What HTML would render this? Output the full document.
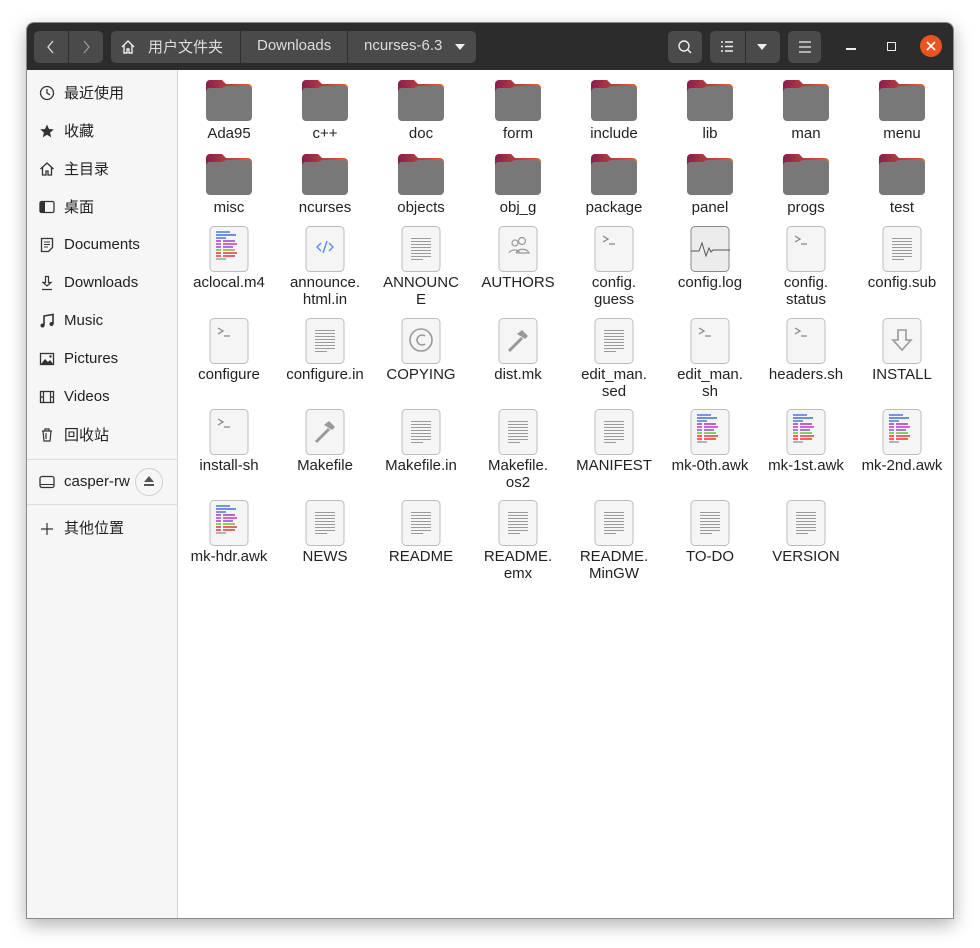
<!DOCTYPE html>
<html><head><meta charset="utf-8"><style>
*{margin:0;padding:0;box-sizing:border-box}
body{width:980px;height:948px;background:#fff;position:relative;overflow:hidden;font-family:"Liberation Sans","Noto Sans CJK SC",sans-serif}
#win{position:absolute;left:26px;top:22px;width:928px;height:897px;background:#fff;border:1px solid #8a8a8a;border-radius:8px 8px 0 0;overflow:hidden;box-shadow:0 6px 18px rgba(0,0,0,.3)}
#hdr{position:absolute;left:0;top:0;width:928px;height:47px;background:#2c2c2c}
.btn{position:absolute;top:8px;height:32px;background:#4a4a4a;border-radius:5px;color:#ddd;font-size:15px}
.sep{position:absolute;top:0;width:1px;height:32px;background:#2e2e2e}
#side{position:absolute;left:0;top:47px;width:151px;height:850px;background:#f6f6f6;border-right:1px solid #d6d6d6}
.si{position:absolute;left:37px;font-size:15px;color:#222;line-height:18px}
.sic{position:absolute;left:12px;width:16px;height:16px}
.hr{position:absolute;left:0;width:151px;height:1px;background:#dcdcdc}
.it{position:absolute;width:96px;text-align:center;font-size:15px;line-height:17px;color:#222}
.it svg{display:block;margin:0 auto}
</style></head><body>
<svg width="0" height="0" style="position:absolute">
<defs>
<linearGradient id="fg" x1="0" y1="0" x2="1" y2="0"><stop offset="0" stop-color="#8a1e4f"/><stop offset="1" stop-color="#e9602a"/></linearGradient>
<symbol id="fold" viewBox="0 0 48 42"><path d="M1 5a4 4 0 0 1 4-4h12l4 4h22a4 4 0 0 1 4 4v10H1z" fill="url(#fg)"/><path d="M1 13a4 4 0 0 1 4-4h12l4-2h22a4 4 0 0 1 4 4v27a4 4 0 0 1-4 4H5a4 4 0 0 1-4-4z" fill="#787878"/></symbol>
<symbol id="doc" viewBox="0 0 40 46"><rect x="1" y="0.5" width="38" height="45" rx="4" fill="#f5f5f5" stroke="#bcbcbc"/></symbol>
<symbol id="txt" viewBox="0 0 40 46"><g stroke="#9a9a9a" stroke-width="1"><path d="M10 12.5h20M10 15.5h20M10 18.5h20M10 21.5h20M10 24.5h20M10 27.5h20M10 30.5h20M10 33.5h12"/></g></symbol>
<symbol id="code" viewBox="0 0 40 46"><g stroke-width="1.4"><path d="M7 6h14" stroke="#3d6fe0"/><path d="M7 9h20" stroke="#3d6fe0"/><path d="M7 12h10" stroke="#3d6fe0"/><path d="M7 15h5M14 15h12" stroke="#a23ac0"/><path d="M7 18h5M14 18h14" stroke="#c03ac0"/><path d="M7 21h5M14 21h10" stroke="#8b4fd0"/><path d="M7 24h5M14 24h12" stroke="#6abf3a"/><path d="M7 27h5M14 27h14" stroke="#e33"/><path d="M7 30h5M14 30h12" stroke="#e33"/><path d="M7 33h10" stroke="#999"/></g></symbol>
<symbol id="term" viewBox="0 0 40 46"><path d="M9 10l5 3-5 3M15 18h6" fill="none" stroke="#888" stroke-width="1.3"/></symbol>
</defs></svg>
<div id="win">
<div id="hdr">
 <div class="btn" style="left:7px;width:69px"><div class="sep" style="left:34px"></div>
  <svg style="position:absolute;left:12px;top:9px" width="10" height="14"><path d="M7 1L2 7l5 6" fill="none" stroke="#ddd" stroke-width="1.3"/></svg>
  <svg style="position:absolute;left:47px;top:9px" width="10" height="14"><path d="M3 1l5 6-5 6" fill="none" stroke="#999" stroke-width="1.3"/></svg></div>
 <div class="btn" style="left:84px;width:365px">
  <svg style="position:absolute;left:9px;top:8px" width="16" height="16"><path d="M2 8L8 2l6 6M4 6.5V14h3v-4h2v4h3V6.5" fill="none" stroke="#eee" stroke-width="1.4"/></svg>
  <span style="position:absolute;left:37px;top:5px">用户文件夹</span><div class="sep" style="left:129px"></div>
  <span style="position:absolute;left:146px;top:6px">Downloads</span><div class="sep" style="left:236px"></div>
  <span style="position:absolute;left:253px;top:6px">ncurses-6.3</span>
  <svg style="position:absolute;left:344px;top:13px" width="10" height="6"><path d="M0 0h10L5 6z" fill="#eee"/></svg></div>
 <div class="btn" style="left:641px;width:34px"><svg style="position:absolute;left:9px;top:8px" width="16" height="16"><circle cx="7" cy="7" r="5" fill="none" stroke="#eee" stroke-width="1.4"/><path d="M10.5 10.5L14 14" stroke="#eee" stroke-width="1.5"/></svg></div>
 <div class="btn" style="left:683px;width:70px"><div class="sep" style="left:35px"></div>
  <svg style="position:absolute;left:11px;top:10px" width="14" height="12"><path d="M0 1h2M0 5.5h2M0 10h2M4 1h8M4 5.5h8M4 10h8" stroke="#eee" stroke-width="1.6"/></svg>
  <svg style="position:absolute;left:47px;top:13px" width="10" height="6"><path d="M0 0h10L5 6z" fill="#eee"/></svg></div>
 <div class="btn" style="left:761px;width:33px"><svg style="position:absolute;left:10px;top:10px" width="14" height="12"><path d="M1 1h12M1 6h12M1 11h12" stroke="#eee" stroke-width="1.3"/></svg></div>
 <div style="position:absolute;left:819px;top:25px;width:10px;height:1.5px;background:#eee"></div>
 <div style="position:absolute;left:860px;top:19px;width:9px;height:9px;border:1.5px solid #eee"></div>
 <div style="position:absolute;left:893px;top:12px;width:22px;height:22px;border-radius:50%;background:#e95420"></div>
 <svg style="position:absolute;left:898px;top:17px" width="12" height="12"><path d="M2 2l8 8M10 2l-8 8" stroke="#fff" stroke-width="1.6"/></svg>
</div>
<div id="side">
 <svg class="sic" style="top:15px"><circle cx="8" cy="8" r="6.5" fill="none" stroke="#333" stroke-width="1.3"/><path d="M8 4v4l3 2" fill="none" stroke="#333" stroke-width="1.3"/></svg><div class="si" style="top:15px">最近使用</div>
 <svg class="sic" style="top:53px"><path d="M8 1.5l2 4.5 4.8.4-3.7 3.2 1.1 4.8L8 11.8 3.8 14.4l1.1-4.8L1.2 6.4 6 6z" fill="#333"/></svg><div class="si" style="top:53px">收藏</div>
 <svg class="sic" style="top:91px"><path d="M1.5 8L8 2l6.5 6M3.5 6.5V14h3.5v-4h2v4h3.5V6.5" fill="none" stroke="#333" stroke-width="1.3"/></svg><div class="si" style="top:91px">主目录</div>
 <svg class="sic" style="top:129px"><rect x="1" y="2.5" width="14" height="11" rx="1.5" fill="none" stroke="#333" stroke-width="1.3"/><rect x="1" y="2.5" width="5" height="11" fill="#333"/></svg><div class="si" style="top:129px">桌面</div>
 <svg class="sic" style="top:167px"><path d="M2.5 1.5h11v9l-4 4h-7z" fill="none" stroke="#333" stroke-width="1.3"/><path d="M5 5h6M5 7.5h6M5 10h4" stroke="#333"/></svg><div class="si" style="top:166px">Documents</div>
 <svg class="sic" style="top:205px"><path d="M6.5 1.5h3v6h2.5L8 11 4 7.5h2.5zM3 14.5h10" fill="none" stroke="#333" stroke-width="1.2"/></svg><div class="si" style="top:204px">Downloads</div>
 <svg class="sic" style="top:243px"><path d="M5 12.5V3l9-1.5V11" fill="none" stroke="#333" stroke-width="1.6"/><circle cx="3.5" cy="12.5" r="2" fill="#333"/><circle cx="12.5" cy="11" r="2" fill="#333"/></svg><div class="si" style="top:242px">Music</div>
 <svg class="sic" style="top:281px"><rect x="1.5" y="2.5" width="13" height="11" fill="none" stroke="#333" stroke-width="1.3"/><path d="M2 13l4-5 3 3 2-2 3 4z" fill="#333"/><circle cx="11.5" cy="5.5" r="1.2" fill="#333"/></svg><div class="si" style="top:280px">Pictures</div>
 <svg class="sic" style="top:319px"><rect x="1.5" y="2.5" width="13" height="11" fill="none" stroke="#333" stroke-width="1.3"/><path d="M4.5 2.5v11M11.5 2.5v11M1.5 8h3M11.5 8h3" stroke="#333" stroke-width="1.2"/></svg><div class="si" style="top:318px">Videos</div>
 <svg class="sic" style="top:357px"><path d="M3 4h10M6 4V2h4v2M4 4l1 10h6l1-10M7 6v6" fill="none" stroke="#333" stroke-width="1.2"/></svg><div class="si" style="top:357px">回收站</div>
 <div class="hr" style="top:389px"></div>
 <svg class="sic" style="top:404px"><rect x="1" y="2.5" width="14" height="11" rx="2" fill="none" stroke="#333" stroke-width="1.3"/><path d="M1 10.5h14" stroke="#333"/></svg><div class="si" style="top:403px">casper-rw</div>
 <div style="position:absolute;left:108px;top:398px;width:28px;height:28px;border:1px solid #d0d0d0;border-radius:50%;background:#f6f6f6"></div>
 <svg style="position:absolute;left:117px;top:406px" width="10" height="11"><path d="M5 0l5 6H0zM0 8h10v2H0z" fill="#555"/></svg>
 <div class="hr" style="top:434px"></div>
 <svg class="sic" style="top:451px"><path d="M8 2v12M2 8h12" stroke="#333" stroke-width="1.2"/></svg><div class="si" style="top:450px">其他位置</div>
</div>
</div>
<div id="grid">
<div class="it" style="left:181px;top:79px"><svg width="48" height="42"><use href="#fold"/></svg><div style="margin-top:4px">Ada95</div></div>
<div class="it" style="left:277px;top:79px"><svg width="48" height="42"><use href="#fold"/></svg><div style="margin-top:4px">c++</div></div>
<div class="it" style="left:373px;top:79px"><svg width="48" height="42"><use href="#fold"/></svg><div style="margin-top:4px">doc</div></div>
<div class="it" style="left:470px;top:79px"><svg width="48" height="42"><use href="#fold"/></svg><div style="margin-top:4px">form</div></div>
<div class="it" style="left:566px;top:79px"><svg width="48" height="42"><use href="#fold"/></svg><div style="margin-top:4px">include</div></div>
<div class="it" style="left:662px;top:79px"><svg width="48" height="42"><use href="#fold"/></svg><div style="margin-top:4px">lib</div></div>
<div class="it" style="left:758px;top:79px"><svg width="48" height="42"><use href="#fold"/></svg><div style="margin-top:4px">man</div></div>
<div class="it" style="left:854px;top:79px"><svg width="48" height="42"><use href="#fold"/></svg><div style="margin-top:4px">menu</div></div>
<div class="it" style="left:181px;top:153px"><svg width="48" height="42"><use href="#fold"/></svg><div style="margin-top:4px">misc</div></div>
<div class="it" style="left:277px;top:153px"><svg width="48" height="42"><use href="#fold"/></svg><div style="margin-top:4px">ncurses</div></div>
<div class="it" style="left:373px;top:153px"><svg width="48" height="42"><use href="#fold"/></svg><div style="margin-top:4px">objects</div></div>
<div class="it" style="left:470px;top:153px"><svg width="48" height="42"><use href="#fold"/></svg><div style="margin-top:4px">obj_g</div></div>
<div class="it" style="left:566px;top:153px"><svg width="48" height="42"><use href="#fold"/></svg><div style="margin-top:4px">package</div></div>
<div class="it" style="left:662px;top:153px"><svg width="48" height="42"><use href="#fold"/></svg><div style="margin-top:4px">panel</div></div>
<div class="it" style="left:758px;top:153px"><svg width="48" height="42"><use href="#fold"/></svg><div style="margin-top:4px">progs</div></div>
<div class="it" style="left:854px;top:153px"><svg width="48" height="42"><use href="#fold"/></svg><div style="margin-top:4px">test</div></div>
<div class="it" style="left:181px;top:226px"><svg width="40" height="46"><use href="#doc"/><use href="#code"/></svg><div style="margin-top:2px">aclocal.m4</div></div>
<div class="it" style="left:277px;top:226px"><svg width="40" height="46"><use href="#doc"/><path d="M16 17l-4 4 4 4M24 17l4 4-4 4M22 15l-4 12" fill="none" stroke="#5b8af0" stroke-width="1.4"/></svg><div style="margin-top:2px">announce.<br>html.in</div></div>
<div class="it" style="left:373px;top:226px"><svg width="40" height="46"><use href="#doc"/><use href="#txt"/></svg><div style="margin-top:2px">ANNOUNC<br>E</div></div>
<div class="it" style="left:470px;top:226px"><svg width="40" height="46"><use href="#doc"/><g fill="none" stroke="#999" stroke-width="1.2"><circle cx="17" cy="17" r="3"/><circle cx="24" cy="15" r="3.5"/><path d="M11 27a6 5 0 0 1 11 0M18 27a7 6 0 0 1 13 0h-13"/></g></svg><div style="margin-top:2px">AUTHORS</div></div>
<div class="it" style="left:566px;top:226px"><svg width="40" height="46"><use href="#doc"/><use href="#term"/></svg><div style="margin-top:2px">config.<br>guess</div></div>
<div class="it" style="left:662px;top:226px"><svg width="40" height="46"><rect x="1" y="0.5" width="38" height="45" rx="4" fill="#ececec" stroke="#8a8a8a"/><path d="M1 25h8l3-8 4 13 3-8 2 4 2-2h17" fill="none" stroke="#555" stroke-width="1"/></svg><div style="margin-top:2px">config.log</div></div>
<div class="it" style="left:758px;top:226px"><svg width="40" height="46"><use href="#doc"/><use href="#term"/></svg><div style="margin-top:2px">config.<br>status</div></div>
<div class="it" style="left:854px;top:226px"><svg width="40" height="46"><use href="#doc"/><use href="#txt"/></svg><div style="margin-top:2px">config.sub</div></div>
<div class="it" style="left:181px;top:318px"><svg width="40" height="46"><use href="#doc"/><use href="#term"/></svg><div style="margin-top:2px">configure</div></div>
<div class="it" style="left:277px;top:318px"><svg width="40" height="46"><use href="#doc"/><use href="#txt"/></svg><div style="margin-top:2px">configure.in</div></div>
<div class="it" style="left:373px;top:318px"><svg width="40" height="46"><use href="#doc"/><circle cx="20" cy="22" r="11" fill="none" stroke="#999" stroke-width="1.6"/><path d="M24 18a5 5 0 1 0 0 8" fill="none" stroke="#999" stroke-width="1.6"/></svg><div style="margin-top:2px">COPYING</div></div>
<div class="it" style="left:470px;top:318px"><svg width="40" height="46"><use href="#doc"/><path d="M11 33l13-13" stroke="#999" stroke-width="3"/><path d="M19 16l5-4 6 6-3 3-3-2z" fill="#999"/></svg><div style="margin-top:2px">dist.mk</div></div>
<div class="it" style="left:566px;top:318px"><svg width="40" height="46"><use href="#doc"/><use href="#txt"/></svg><div style="margin-top:2px">edit_man.<br>sed</div></div>
<div class="it" style="left:662px;top:318px"><svg width="40" height="46"><use href="#doc"/><use href="#term"/></svg><div style="margin-top:2px">edit_man.<br>sh</div></div>
<div class="it" style="left:758px;top:318px"><svg width="40" height="46"><use href="#doc"/><use href="#term"/></svg><div style="margin-top:2px">headers.sh</div></div>
<div class="it" style="left:854px;top:318px"><svg width="40" height="46"><use href="#doc"/><path d="M16 12h8v10h5l-9 10-9-10h5z" fill="none" stroke="#999" stroke-width="1.6"/></svg><div style="margin-top:2px">INSTALL</div></div>
<div class="it" style="left:181px;top:409px"><svg width="40" height="46"><use href="#doc"/><use href="#term"/></svg><div style="margin-top:2px">install-sh</div></div>
<div class="it" style="left:277px;top:409px"><svg width="40" height="46"><use href="#doc"/><path d="M11 33l13-13" stroke="#999" stroke-width="3"/><path d="M19 16l5-4 6 6-3 3-3-2z" fill="#999"/></svg><div style="margin-top:2px">Makefile</div></div>
<div class="it" style="left:373px;top:409px"><svg width="40" height="46"><use href="#doc"/><use href="#txt"/></svg><div style="margin-top:2px">Makefile.in</div></div>
<div class="it" style="left:470px;top:409px"><svg width="40" height="46"><use href="#doc"/><use href="#txt"/></svg><div style="margin-top:2px">Makefile.<br>os2</div></div>
<div class="it" style="left:566px;top:409px"><svg width="40" height="46"><use href="#doc"/><use href="#txt"/></svg><div style="margin-top:2px">MANIFEST</div></div>
<div class="it" style="left:662px;top:409px"><svg width="40" height="46"><use href="#doc"/><use href="#code"/></svg><div style="margin-top:2px">mk-0th.awk</div></div>
<div class="it" style="left:758px;top:409px"><svg width="40" height="46"><use href="#doc"/><use href="#code"/></svg><div style="margin-top:2px">mk-1st.awk</div></div>
<div class="it" style="left:854px;top:409px"><svg width="40" height="46"><use href="#doc"/><use href="#code"/></svg><div style="margin-top:2px">mk-2nd.awk</div></div>
<div class="it" style="left:181px;top:500px"><svg width="40" height="46"><use href="#doc"/><use href="#code"/></svg><div style="margin-top:2px">mk-hdr.awk</div></div>
<div class="it" style="left:277px;top:500px"><svg width="40" height="46"><use href="#doc"/><use href="#txt"/></svg><div style="margin-top:2px">NEWS</div></div>
<div class="it" style="left:373px;top:500px"><svg width="40" height="46"><use href="#doc"/><use href="#txt"/></svg><div style="margin-top:2px">README</div></div>
<div class="it" style="left:470px;top:500px"><svg width="40" height="46"><use href="#doc"/><use href="#txt"/></svg><div style="margin-top:2px">README.<br>emx</div></div>
<div class="it" style="left:566px;top:500px"><svg width="40" height="46"><use href="#doc"/><use href="#txt"/></svg><div style="margin-top:2px">README.<br>MinGW</div></div>
<div class="it" style="left:662px;top:500px"><svg width="40" height="46"><use href="#doc"/><use href="#txt"/></svg><div style="margin-top:2px">TO-DO</div></div>
<div class="it" style="left:758px;top:500px"><svg width="40" height="46"><use href="#doc"/><use href="#txt"/></svg><div style="margin-top:2px">VERSION</div></div>
</div>
</body></html>
